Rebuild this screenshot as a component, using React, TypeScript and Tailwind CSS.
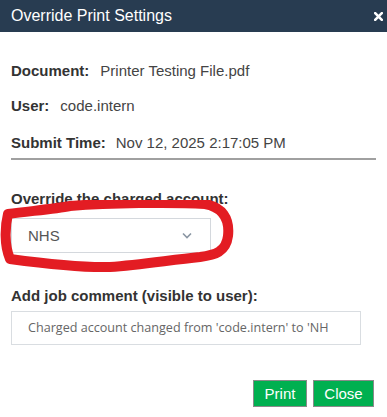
export default function App() {
	return (
		<div className="relative h-[417px] w-[387px] bg-white font-['Liberation_Sans',Arial,sans-serif]">
			<div className="flex h-[32px] items-center justify-between bg-[#283c51] pl-[11px] pr-[4px]">
				<span className="text-[16px] text-white">Override Print Settings</span>
				<svg width="9" height="9" viewBox="0 0 9 9" className="mt-[1px]">
					<path d="M1.2 1.2 L7.8 7.8 M7.8 1.2 L1.2 7.8" stroke="#fff" strokeWidth="2.6" strokeLinecap="square" />
				</svg>
			</div>

			<div className="px-[11px] pt-[29px] text-[15px] leading-[20px]">
				<div className="flex">
					<span className="font-bold text-[#333]">Document:</span>
					<span className="ml-[11px] text-[#444]">Printer Testing File.pdf</span>
				</div>
				<div className="mt-[15px] flex">
					<span className="font-bold text-[#333]">User:</span>
					<span className="ml-[11px] text-[#444]">code.intern</span>
				</div>
				<div className="mt-[17px] flex">
					<span className="font-bold text-[#333]">Submit Time:</span>
					<span className="ml-[10px] text-[#444]">Nov 12, 2025 2:17:05 PM</span>
				</div>
				<div className="mt-[5px] border-t-2 border-t-[#a0a0a0]" />

				<div className="mt-[29px] font-bold text-[#333]">Override the charged account:</div>
				<div className="mt-[9px] flex h-[35px] w-[200px] items-center justify-between border border-[#d4d8dd] pl-[16px] pr-[18px]">
					<span className="text-[15px] text-[#555]">NHS</span>
					<svg width="10" height="7" viewBox="0 0 10 7">
						<path d="M1 1.5 L5 5.5 L9 1.5" fill="none" stroke="#8a96a3" strokeWidth="1.6" />
					</svg>
				</div>

				<div className="mt-[33px] font-bold text-[#333]">Add job comment (visible to user):</div>
				<div className="mt-[5px] flex h-[34px] w-[350px] items-center overflow-hidden whitespace-nowrap border border-[#d9dde1] pl-[16px] font-['Open_Sans',sans-serif] text-[12.6px] text-[#666]">
					Charged account changed from 'code.intern' to 'NH
				</div>

				<div className="mt-[35px] flex justify-end gap-[6px] pr-[2px]">
					<button className="h-[27px] w-[54px] border border-[#8a8a8a] bg-[#00b050] text-[15px] text-white">Print</button>
					<button className="h-[27px] w-[61px] border border-[#8a8a8a] bg-[#00b050] text-[15px] text-white">Close</button>
				</div>
			</div>

			<svg className="pointer-events-none absolute left-0 top-[200px]" width="240" height="75" viewBox="0 0 240 75">
				<path
					d="M8 14 C30 11, 55 9, 70 6 C110 3, 170 2, 205 4 C222 7, 230 18, 228 36 C226 52, 215 55, 200 57 C170 60, 140 65, 110 67 C80 68, 40 63, 10 59 C4 45, 5 26, 8 14 Z"
					fill="none"
					stroke="#e31c23"
					strokeWidth="10"
					strokeLinejoin="round"
				/>
			</svg>
		</div>
	);
}
